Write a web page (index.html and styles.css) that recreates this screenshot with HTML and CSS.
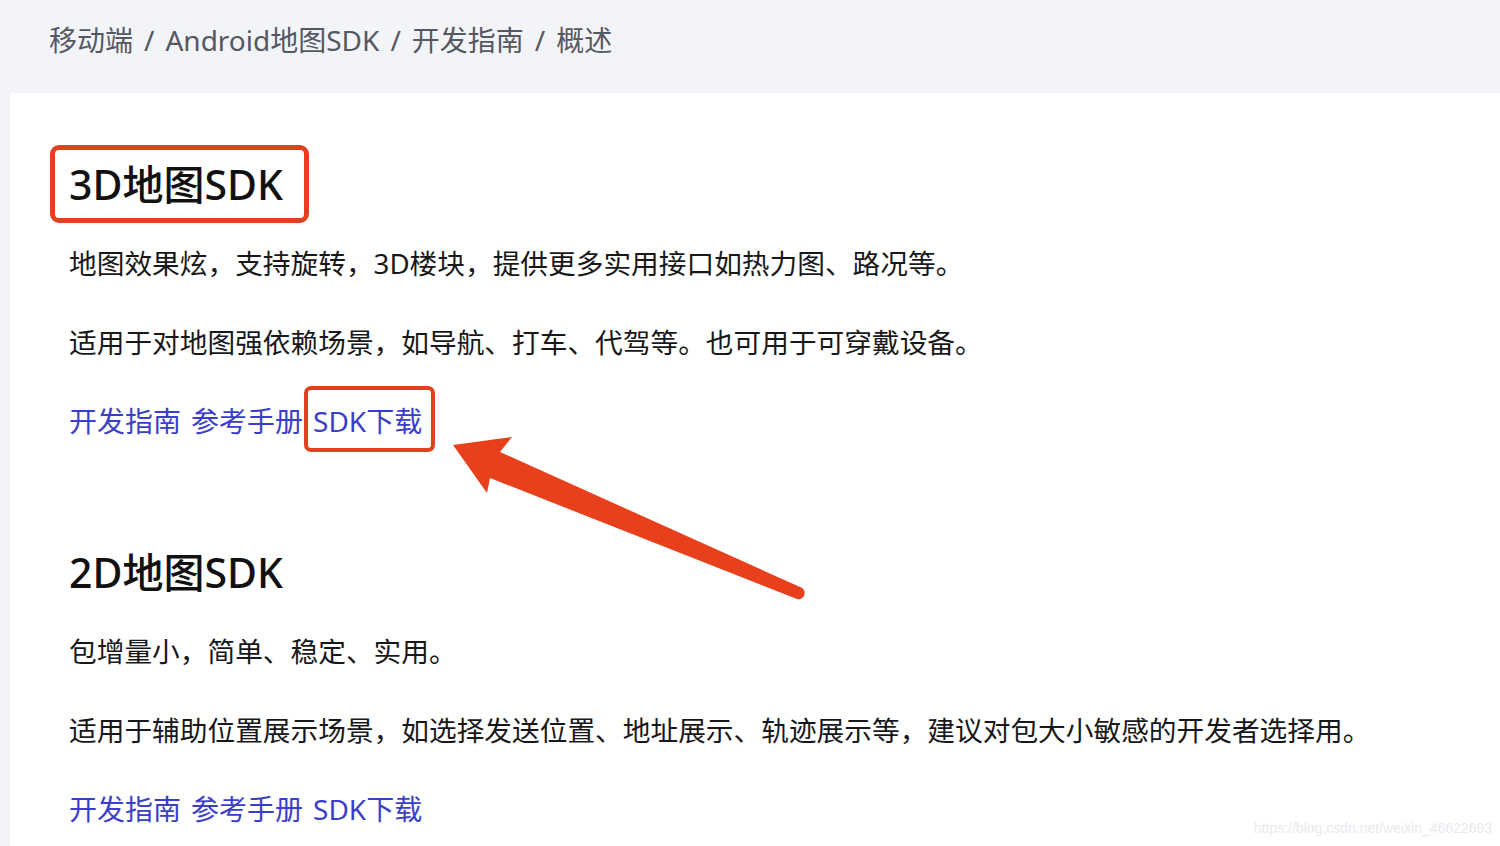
FILE: index.html
```html
<!DOCTYPE html>
<html lang="zh-CN">
<head>
<meta charset="utf-8">
<title>概述</title>
<link rel="stylesheet" href="styles.css">
</head>
<body>
<div class="page">
  <nav class="crumbs">
    <span>移动端</span><span class="sep">/</span><span>Android地图SDK</span><span class="sep">/</span><span>开发指南</span><span class="sep">/</span><span>概述</span>
  </nav>
  <main class="panel">
    <section class="sdk">
      <h2 class="title"><span class="mark mark-title">3D地图SDK</span></h2>
      <p class="text">地图效果炫，支持旋转，3D楼块，提供更多实用接口如热力图、路况等。</p>
      <p class="text">适用于对地图强依赖场景，如导航、打车、代驾等。也可用于可穿戴设备。</p>
      <p class="links"><a class="link">开发指南</a><a class="link">参考手册</a><a class="link"><span class="mark mark-link">SDK下载</span></a></p>
    </section>
    <section class="sdk">
      <h2 class="title"><span>2D地图SDK</span></h2>
      <p class="text">包增量小，简单、稳定、实用。</p>
      <p class="text">适用于辅助位置展示场景，如选择发送位置、地址展示、轨迹展示等，建议对包大小敏感的开发者选择用。</p>
      <p class="links"><a class="link">开发指南</a><a class="link">参考手册</a><a class="link">SDK下载</a></p>
    </section>
  </main>
  <svg class="arrow" width="1500" height="846" viewBox="0 0 1500 846" aria-hidden="true">
    <path d="M453 445 L512 437 L500 452 L800 587 A6 6 0 0 1 797 599 L490 478 L487 493 Z" fill="#e8401c"/>
  </svg>
  <div class="watermark">https://blog.csdn.net/weixin_46622693</div>
</div>
</body>
</html>
```

FILE: styles.css
```css
html, body {
  margin: 0;
  padding: 0;
}
body {
  background: #f3f4f8;
  font-family: "Noto Sans", "Noto Sans CJK SC", sans-serif;
  width: 1500px;
  height: 846px;
  overflow: hidden;
}
.page {
  position: relative;
  height: 846px;
}
.crumbs {
  height: 93px;
  box-sizing: border-box;
  padding: 20px 0 0 49px;
  font-size: 28px;
  line-height: 40px;
  color: #545863;
  display: flex;
}
.crumbs .sep {
  margin: 0 11px;
}
.panel {
  margin-left: 10px;
  background: #ffffff;
  height: 753px;
  padding-left: 59px;
  box-sizing: border-box;
}
.sdk {
  padding-top: 52px;
  padding-bottom: 40px;
}
.title {
  margin: 0 0 20px 0;
  border-top: 5px solid transparent;
  border-bottom: 5px solid transparent;
  font-size: 41px;
  line-height: 68px;
  font-weight: 500;
  color: #111111;
}
.text {
  margin: 0 0 39px 0;
  font-size: 27.7px;
  line-height: 40px;
  color: #18181a;
}
.links {
  margin: 0;
  font-size: 28px;
  line-height: 40px;
  display: flex;
  gap: 10px;
}
.link {
  color: #3b3ec9;
  text-decoration: none;
}
.mark {
  position: relative;
  display: inline-block;
}
.mark::after {
  content: "";
  position: absolute;
  border-style: solid;
  border-color: #e2411f;
  box-sizing: border-box;
}
.mark-title::after {
  top: -5px;
  bottom: -5px;
  left: -19px;
  right: -26px;
  border-width: 5px;
  border-radius: 9px;
}
.mark-link::after {
  top: -15px;
  bottom: -11px;
  left: -9px;
  right: -13px;
  border-width: 4px;
  border-radius: 7px;
}
.arrow {
  position: absolute;
  left: 0;
  top: 0;
  pointer-events: none;
}
.watermark {
  position: absolute;
  right: 8px;
  bottom: 9px;
  font-size: 14px;
  line-height: 18px;
  color: #e9e9ee;
  font-family: "Liberation Sans", sans-serif;
}
```
